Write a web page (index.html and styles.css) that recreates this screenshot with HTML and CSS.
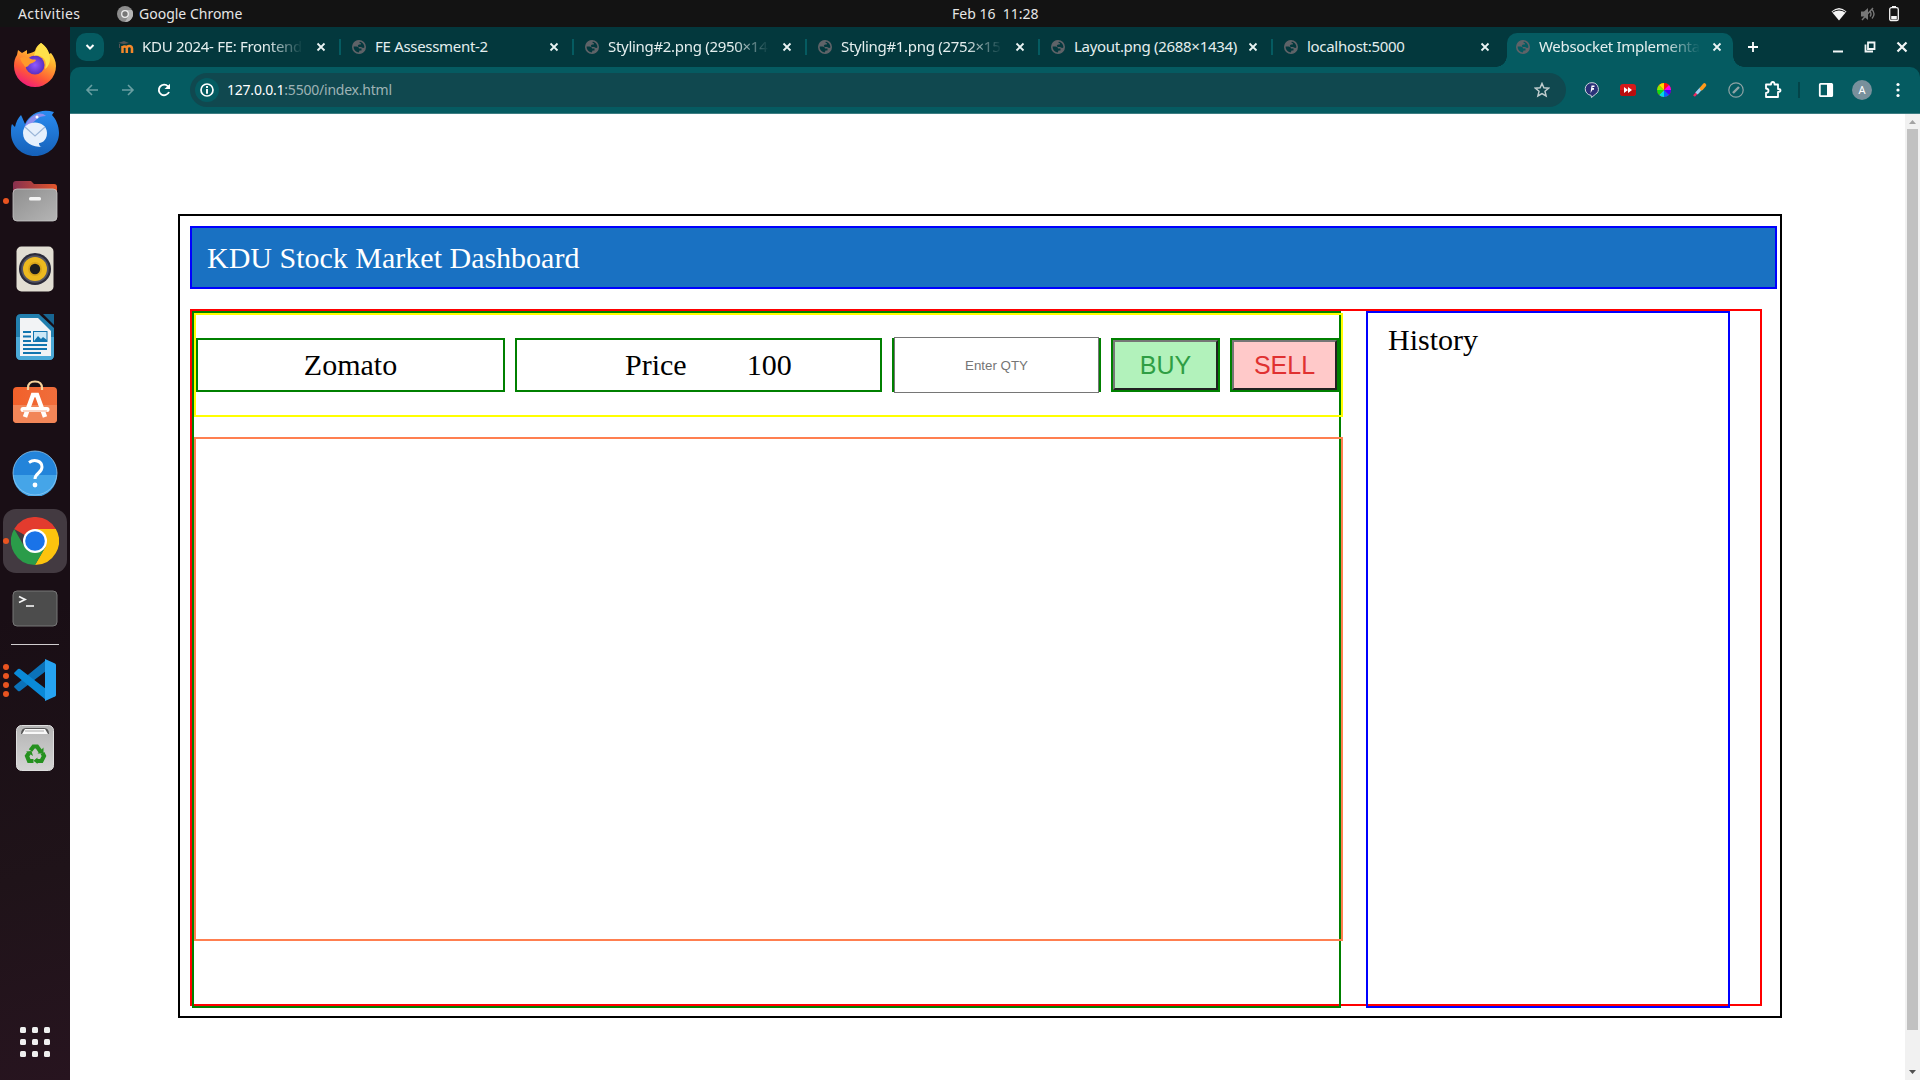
FILE: index.html
```html
<!DOCTYPE html>
<html lang="en">
<head>
<meta charset="utf-8">
<title>Websocket Implementation</title>
<link rel="stylesheet" href="styles.css">
</head>
<body>
<svg class="defs" width="0" height="0" aria-hidden="true">
  <defs>
    <linearGradient id="fxBody" x1=".8" y1="0" x2=".3" y2="1"><stop offset="0" stop-color="#fff44f"/><stop offset=".35" stop-color="#ffb02e"/><stop offset=".7" stop-color="#ff5a36"/><stop offset="1" stop-color="#f0197d"/></linearGradient>
    <radialGradient id="fxGlobe"><stop offset="0" stop-color="#9059ff"/><stop offset="1" stop-color="#5b2fc0"/></radialGradient>
    <linearGradient id="tbBody" x1="0" y1="0" x2="0" y2="1"><stop offset="0" stop-color="#2a8cf0"/><stop offset="1" stop-color="#1560b8"/></linearGradient>
    <linearGradient id="folderBack"><stop offset="0" stop-color="#86304f"/><stop offset="1" stop-color="#e3562b"/></linearGradient>
    <linearGradient id="folderFront" x1="0" y1="0" x2="1" y2="1"><stop offset="0" stop-color="#8f8f8f"/><stop offset="1" stop-color="#b5b5b5"/></linearGradient>
    <linearGradient id="bag" x1="0" y1="0" x2="1" y2="0"><stop offset="0" stop-color="#f2602a"/><stop offset="1" stop-color="#ef6e3c"/></linearGradient>
    <linearGradient id="bin" x1="0" y1="0" x2="0" y2="1"><stop offset="0" stop-color="#b4b4b4"/><stop offset="1" stop-color="#d4d4d4"/></linearGradient>
    <symbol id="globe" viewBox="0 0 14 14"><circle cx="7" cy="7" r="6.200" fill="none" stroke="#5f6368" stroke-width="1.600"/><path d="M8 .5A6.500 6.500 0 0 0 .6 6.500H4.500q2.500 0 2.500 2H9.500v2H7.500l-1 3Q11.500 13.500 13 9.500V7.500L11 8 9 7H6.500L5.800 5.500 7 4.500h1.800V3H7.500z" fill="#5f6368"/></symbol>
    <symbol id="x" viewBox="0 0 10 10"><path d="M1.500 1.500l7 7M8.500 1.500l-7 7" stroke="#eaf3f3" stroke-width="1.800" fill="none"/></symbol>
  </defs>
</svg>

<header class="panel">
  <span class="activities">Activities</span>
  <svg class="app-icon" width="16" height="16" viewBox="0 0 16 16"><circle cx="8" cy="8" r="8" fill="#8c8c8c"/><path d="M8 4h7A8 8 0 0 1 8 16l3.500-6" fill="#b5b5b5"/><circle cx="8" cy="8" r="3.300" fill="#777" stroke="#eee" stroke-width="1.300"/></svg>
  <span class="app-name">Google Chrome</span>
  <span class="clock">Feb 16&nbsp; 11:28</span>
  <span class="tray">
    <svg width="16" height="14" viewBox="0 0 16 14"><path d="M.5 4.500Q8-2.500 15.500 4.500L8 13.500z" fill="#f4f4f4"/><path d="M1.500 5.200Q8 .8 14.500 5.200" fill="none" stroke="#131313" stroke-width="1"/></svg>
    <svg width="16" height="16" viewBox="0 0 16 16"><path d="M1 5.500h3l4-3.500v12l-4-3.500H1z" fill="#777"/><path d="M10 5.500q2 2.500 0 5M12 3.500q4 4.500 0 9M2 14 13 2" stroke="#777" stroke-width="1.400" fill="none"/></svg>
    <svg width="10" height="16" viewBox="0 0 10 16"><path d="M3 1h4" stroke="#f4f4f4" stroke-width="2"/><rect x=".7" y="1.700" width="8.600" height="13" rx="1.800" fill="none" stroke="#f4f4f4" stroke-width="1.300"/><rect x="2.200" y="10" width="5.600" height="3.500" fill="#f4f4f4"/></svg>
  </span>
</header>

<div class="desktop">
  <nav class="dock">
    <div class="dock-item"><svg class="firefox" width="42" height="44" viewBox="0 0 42 44"><path d="M27 0c4 3 7 7 8 11l2-1c3 4 5 8 5 13a21 21 0 0 1-42 0c0-5 1-8 3-11l1-5 4 3 5-3v4c4-1 7-2 8-3 1-4 3-6 6-8z" fill="url(#fxBody)"/><circle cx="21" cy="22" r="9.500" fill="url(#fxGlobe)"/><path d="M6 15c5-2 8-1 11 1 2 1 4 0 5 1-1 3-6 3-7 5-2 3-5 2-5 0-2-2-3-4-4-7z" fill="#ff9a2b"/><path d="M27 0c5 3 9 9 9 16 0 4-2 8-5 10 2-7 0-11-5-13-3-1-4-1-6 0 1-5 3-9 7-13z" fill="#ffe14a"/></svg></div>
    <div class="dock-item"><svg width="48" height="48" viewBox="0 0 48 48"><path d="M10 6c2 4 3 7 4 9C19 4 31-1 43 3l-2 3c4 4 7 11 7 18 0 13-11 23-24 23S0 37 0 24c0-4 0-7 1-9l3 3c1-5 3-9 6-12z" fill="url(#tbBody)"/><path d="M13 19c5-3 9-5 13-9 2-2 5-3 9-3-6-6-17-1-22 12z" fill="#8e8ff0"/><circle cx="26" cy="8" r="1.500" fill="#fff"/><path d="M12 24c0-14 24-14 24 0 0 9-7 10-8 10 0 2 1 4 3 4-9 0-19-4-19-14z" fill="#e6f0fc"/><path d="M14 18l10 9 10-9" fill="none" stroke="#9bb6d8" stroke-width="1.200"/></svg></div>
    <div class="dock-item"><i class="dots"><b></b></i><svg width="46" height="42" viewBox="0 0 46 42"><path d="M1 4q0-3 3-3h15l3 3h20q3 0 3 3v14H1z" fill="url(#folderBack)"/><rect x="1" y="9" width="44" height="32" rx="4" fill="url(#folderFront)" stroke="#c6c6c6" stroke-width=".8"/><rect x="17" y="17" width="12" height="3.500" rx="1.500" fill="#f5f5f5"/></svg></div>
    <div class="dock-item"><svg width="38" height="46" viewBox="0 0 38 46"><rect x=".5" y=".5" width="37" height="45" rx="5" fill="#e2ded3"/><circle cx="19" cy="23" r="16" fill="#2b2b3a"/><circle cx="19" cy="23" r="13.800" fill="#555563"/><circle cx="19" cy="23" r="12" fill="#edb91f"/><circle cx="19" cy="23" r="7" fill="#d9a51b"/><circle cx="19" cy="23" r="5.200" fill="#1e1e1e"/></svg></div>
    <div class="dock-item"><svg width="38" height="46" viewBox="0 0 38 46"><path d="M0 5q0-5 5-5h18l15 14v27q0 5-5 5H5q-5 0-5-5z" fill="#227fae"/><path d="M0 23h38v18q0 5-5 5H5q-5 0-5-5z" fill="#4ba9d7"/><path d="M27 0h11v11z" fill="#186693"/><path d="M4 4h18l13 13v25H4z" fill="#f2f3f5"/><path d="M7 18h8M7 22.500h8M7 27h8M7 31h24M7 35h24M7 39h18" stroke="#1275af" stroke-width="1.800"/><rect x="17.500" y="17.500" width="13.500" height="10" fill="#cce8f7" stroke="#1275af"/><path d="M18 27l4-5 3 3 2-2 4 3v1z" fill="#1275af"/></svg></div>
    <div class="dock-item"><svg class="raise" width="46" height="44" viewBox="0 0 46 44"><rect x="1" y="7" width="44" height="36" rx="4" fill="url(#bag)"/><path d="M1 25h44v14q0 4-4 4H5q-4 0-4-4z" fill="#f28658"/><path d="M16 10V8q0-6.500 7-6.500T30 8v2" fill="none" stroke="#f8d39c" stroke-width="2.200"/><path d="M13 37l8-22h4l8 22" fill="none" stroke="#fff" stroke-width="4.500"/><path d="M11 29.500h24" stroke="#fff" stroke-width="5" stroke-linecap="round"/><path d="M11 31h24" stroke="#f7a988" stroke-width="1"/></svg></div>
    <div class="dock-item"><svg width="46" height="46" viewBox="0 0 46 46"><circle cx="23" cy="23" r="22" fill="#2384da"/><path d="M1 25a22 22 0 0 0 44 0z" fill="#45a5e8"/><circle cx="23" cy="23" r="22" fill="none" stroke="#8fc9f2" stroke-width=".8"/><path d="M17 12.500c5-3.500 13-2 13 4.500 0 6-7 6-7 12" fill="none" stroke="#fff" stroke-width="3"/><circle cx="23" cy="35" r="2.400" fill="#fff"/></svg></div>
    <div class="dock-item active"><i class="dots"><b></b></i><svg width="48" height="48" viewBox="0 0 48 48"><path d="M24 24 3.200 12A24 24 0 0 1 44.800 12z" fill="#e33b2e"/><path d="M24 12h20.800A24 24 0 0 1 24 48l10.400-18z" fill="#fcc30e"/><path d="M3.200 12 13.600 30 24 36 34.400 30 24 48A24 24 0 0 1 3.200 12z" fill="#2a9c49"/><circle cx="24" cy="24" r="12" fill="#fff"/><circle cx="24" cy="24" r="9.800" fill="#1a73e8"/></svg></div>
    <div class="dock-item"><svg width="46" height="38" viewBox="0 0 46 38"><rect x="1" y="1" width="44" height="35" rx="4" fill="#4c4c4c" stroke="#777"/><path d="M7 6.500l6 3-6 3" fill="none" stroke="#f4f4f4" stroke-width="1.800"/><path d="M14 16h8" stroke="#f4f4f4" stroke-width="1.600"/></svg></div>
    <hr class="dock-line">
    <div class="dock-item"><i class="dots"><b></b><b></b><b></b><b></b></i><svg width="42" height="42" viewBox="0 0 42 42"><path d="M0 28l4 4q1 .6 2 0L32 12V1L1 26.500q-1 .8-1 1.500z" fill="#0b72b9"/><path d="M0 14l4-4q1-.6 2 0l26 20v11L1 15.500q-1-.8-1-1.500z" fill="#0a8ad8"/><path d="M31 0l10 4.500q1 .5 1 1.500v30q0 1-1 1.500L31 42z" fill="#26a4f2"/></svg></div>
    <div class="dock-item"><svg width="38" height="46" viewBox="0 0 38 46"><rect x=".5" y=".5" width="37" height="45" rx="5" fill="url(#bin)" stroke="#dedede"/><path d="M5 9q0-6 5-6h18q5 0 5 6z" fill="#555"/><path d="M6 9l3-5h20l3 5z" fill="#f8f8f8"/><path d="M9 6h19" stroke="#aaa"/><g fill="none" stroke="#25911f" stroke-width="4.200"><path d="M14.500 25.500l3-4h3.500l3.500 5"/><path d="M26.500 28l1.500 3-2.500 5h-5"/><path d="M17.500 36h-4.500l-2-5 2-3"/></g><path d="M27.500 22.500v6h-6zM21.500 32.500v6.500l-4-3.300zM10 26.500l5.500-.5 1.500 5z" fill="#25911f"/></svg></div>
    <svg class="apps" width="32" height="32" viewBox="0 0 32 32" fill="#efefef"><rect x="1" y="1" width="6" height="6" rx="1.500"/><rect x="13" y="1" width="6" height="6" rx="1.500"/><rect x="25" y="1" width="6" height="6" rx="1.500"/><rect x="1" y="13" width="6" height="6" rx="1.500"/><rect x="13" y="13" width="6" height="6" rx="1.500"/><rect x="25" y="13" width="6" height="6" rx="1.500"/><rect x="1" y="25" width="6" height="6" rx="1.500"/><rect x="13" y="25" width="6" height="6" rx="1.500"/><rect x="25" y="25" width="6" height="6" rx="1.500"/></svg>
  </nav>

  <div class="browser">
    <div class="tabstrip">
      <div class="tab-search"><svg width="10" height="8" viewBox="0 0 10 8"><path d="M1.500 2 5 5.500 8.500 2" stroke="#fff" stroke-width="2" fill="none"/></svg></div>
      <div class="tab first"><svg class="fav" width="16" height="14" viewBox="0 0 16 14"><path d="M0 3 6 1l5 2-5 1z" fill="#555"/><path d="M1.500 4v4" stroke="#555"/><path d="M4.500 13V6M8.800 13V8.500q0-2.500 2.500-2.500t2.700 2.500V13M4.500 7.500q2-2 4.300 0" fill="none" stroke="#f5882a" stroke-width="2.500"/></svg><span class="title fade">KDU 2024- FE: Frontend</span><svg class="close"><use href="#x"/></svg></div>
      <div class="tab"><svg class="fav"><use href="#globe"/></svg><span class="title">FE Assessment-2</span><svg class="close"><use href="#x"/></svg></div>
      <div class="tab"><svg class="fav"><use href="#globe"/></svg><span class="title fade">Styling#2.png (2950×14</span><svg class="close"><use href="#x"/></svg></div>
      <div class="tab"><svg class="fav"><use href="#globe"/></svg><span class="title fade">Styling#1.png (2752×15</span><svg class="close"><use href="#x"/></svg></div>
      <div class="tab"><svg class="fav"><use href="#globe"/></svg><span class="title">Layout.png (2688×1434)</span><svg class="close"><use href="#x"/></svg></div>
      <div class="tab last"><svg class="fav"><use href="#globe"/></svg><span class="title">localhost:5000</span><svg class="close"><use href="#x"/></svg></div>
      <div class="tab current"><svg class="fav"><use href="#globe"/></svg><span class="title fade">Websocket Implementa</span><svg class="close"><use href="#x"/></svg></div>
      <svg class="new-tab" width="12" height="12" viewBox="0 0 12 12"><path d="M6 1v10M1 6h10" stroke="#fff" stroke-width="1.800"/></svg>
      <div class="controls">
        <svg width="12" height="12" viewBox="0 0 12 12"><path d="M1 10.500h10" stroke="#f2f6f6" stroke-width="2"/></svg>
        <svg width="12" height="12" viewBox="0 0 12 12"><path d="M4 1.500h6.500V8H4zM1.500 3.500v7H9" fill="none" stroke="#f2f6f6" stroke-width="1.800"/></svg>
        <svg width="12" height="12" viewBox="0 0 12 12"><path d="M1.500 1.500l9 9M10.500 1.500l-9 9" stroke="#f2f6f6" stroke-width="2.200"/></svg>
      </div>
    </div>

    <div class="toolbar">
      <div class="nav-buttons">
        <svg width="14" height="12" viewBox="0 0 14 12"><path d="M13 6H2M7 1 2 6l5 5" fill="none" stroke="#6a9fa2" stroke-width="1.600"/></svg>
        <svg width="14" height="12" viewBox="0 0 14 12"><path d="M1 6h11M7 1l5 5-5 5" fill="none" stroke="#6a9fa2" stroke-width="1.600"/></svg>
        <svg width="14" height="14" viewBox="0 0 14 14"><path d="M12 9A5.300 5.300 0 1 1 11 3.300" fill="none" stroke="#fff" stroke-width="1.900"/><path d="M13 .8V6H7.500z" fill="#fff"/></svg>
      </div>
      <div class="omnibox">
        <div class="site-info"><svg width="14" height="14" viewBox="0 0 14 14"><circle cx="7" cy="7" r="6" fill="none" stroke="#fff" stroke-width="1.700"/><path d="M7 3v2M7 6v4.700" stroke="#fff" stroke-width="1.900"/></svg></div>
        <span class="url"><span class="host">127.0.0.1</span>:5500/index.html</span>
        <svg class="star" width="16" height="16" viewBox="0 0 16 16"><path d="M8 1.500l1.900 4.300 4.700.4-3.600 3.100 1.100 4.600L8 11.500l-4.100 2.400L5 9.300 1.400 6.200l4.700-.4z" fill="none" stroke="#c0cdce" stroke-width="1.500"/></svg>
      </div>
      <div class="extensions">
        <svg width="16" height="16" viewBox="0 0 16 16"><path d="M8 .7a6.300 6.300 0 0 1 3.300 11.700L7.500 15.500l-.4-2.200A6.300 6.300 0 0 1 8 .7z" fill="#2a3178" stroke="#ccd4dc"/><path d="M10.500 3.500H7.500L6.500 11l2-3.300h1.500V6H8.500V5h2z" fill="#fff"/></svg>
        <svg width="16" height="16" viewBox="0 0 16 16"><rect y="2" width="16" height="12" rx="3" fill="#d61a1a"/><path d="M0 8h16v3q0 3-3 3H3q-3 0-3-3z" fill="#b80d0d"/><path d="M4 5v6l4-3zM8 5v6l4-3z" fill="#fff"/></svg>
        <svg width="16" height="16" viewBox="0 0 16 16"><circle cx="8" cy="8" r="7" fill="#e11"/><path d="M8 8V1a7 7 0 0 1 5 2z" fill="#f11"/><path d="M8 8l5-5a7 7 0 0 1 2 5z" fill="#f0e"/><path d="M8 8h7a7 7 0 0 1-2 5z" fill="#40f"/><path d="M8 8l5 5a7 7 0 0 1-5 2z" fill="#06f"/><path d="M8 8v7a7 7 0 0 1-5-2z" fill="#0dd"/><path d="M8 8l-5 5a7 7 0 0 1-2-5z" fill="#1d1"/><path d="M8 8H1a7 7 0 0 1 2-5z" fill="#8e0"/><path d="M8 8 3 3a7 7 0 0 1 5-2z" fill="#fd0"/></svg>
        <svg width="16" height="16" viewBox="0 0 16 16"><path d="M2 14 8 7.500" stroke="#ee2a62" stroke-width="2.500"/><path d="M4.500 11.500 9 6.500" stroke="#9bd0f2" stroke-width="3.200"/><path d="M9.500 6.500l3-3.500" stroke="#ff9a1b" stroke-width="3.600" stroke-linecap="round"/></svg>
        <svg width="16" height="16" viewBox="0 0 16 16"><circle cx="8" cy="8" r="7.200" fill="none" stroke="#8fa3a5" stroke-width="1.200"/><path d="M5 11l6-6" stroke="#8fa3a5" stroke-width="2.400"/></svg>
        <svg class="puzzle" width="18" height="18" viewBox="0 0 18 18"><path d="M2 3.500h5q0-2.500 1.800-2.500T10.500 3.500H14V8q2.500 0 2.500 1.500T14 11v5H2v-4q2.500-.3 2.500-2.300T2 7.500z" fill="none" stroke="#fff" stroke-width="1.800" stroke-linejoin="round"/></svg>
      </div>
      <i class="divider"></i>
      <div class="tools">
        <svg width="16" height="16" viewBox="0 0 16 16"><rect x="1.800" y="1.800" width="12.400" height="12.400" rx=".8" fill="none" stroke="#fff" stroke-width="1.800"/><path d="M9 1h5v14H9z" fill="#fff"/></svg>
        <div class="avatar">A</div>
        <svg width="4" height="16" viewBox="0 0 4 16" fill="#fff"><circle cx="2" cy="2.500" r="1.600"/><circle cx="2" cy="8" r="1.600"/><circle cx="2" cy="13.500" r="1.600"/></svg>
      </div>
    </div>

    <div class="viewport">
      <main class="dashboard">
        <div class="title-bar">KDU Stock Market Dashboard</div>
        <div class="content">
          <section class="trading">
            <div class="controls-row">
              <div class="cell name">Zomato</div>
              <div class="cell price"><span>Price</span><span>100</span></div>
              <div class="cell qty"><input type="text" placeholder="Enter QTY"></div>
              <div class="cell action"><button class="buy">BUY</button></div>
              <div class="cell action"><button class="sell">SELL</button></div>
            </div>
            <div class="chart"></div>
          </section>
          <section class="history">History</section>
        </div>
      </main>
      <div class="scrollbar">
        <svg width="15" height="15" viewBox="0 0 15 15"><path d="M4 10h7L7.500 6z" fill="#a3a3a3"/></svg>
        <div class="thumb"></div>
        <svg class="down" width="15" height="15" viewBox="0 0 15 15"><path d="M4 5h7L7.500 9z" fill="#505050"/></svg>
      </div>
    </div>
  </div>
</div>
</body>
</html>
```
FILE: styles.css
```css
* { box-sizing: border-box; }
body {
  margin: 0;
  width: 1920px;
  height: 1080px;
  overflow: hidden;
  display: flex;
  flex-direction: column;
  background: #fff;
  font-family: "Noto Sans", sans-serif;
}
svg { display: block; flex: none; }
.defs { position: absolute; }

/* top panel */
.panel {
  height: 27px;
  flex: none;
  background: #131313;
  color: #e6e6e6;
  display: grid;
  grid-template-columns: 99px 16px 837px 90px 1fr;
  align-items: center;
  font-size: 14px;
  line-height: 26px;
  white-space: nowrap;
}
.activities { padding-left: 18px; letter-spacing: .4px; }
.app-icon { margin-left: 18px; }
.app-name { padding-left: 24px; }
.tray {
  justify-self: end;
  display: flex;
  align-items: center;
  gap: 13px;
  padding-right: 21px;
}

.desktop { flex: 1; display: flex; min-height: 0; }

/* dock */
.dock {
  width: 70px;
  flex: none;
  padding: 4px 0 22px;
  display: flex;
  flex-direction: column;
  align-items: center;
  background: linear-gradient(165deg, #190e15 55%, #1f1319 80%, #27141f 100%);
}
.dock-item {
  position: relative;
  width: 64px;
  height: 64px;
  margin: 2px 0;
  flex: none;
  display: flex;
  align-items: center;
  justify-content: center;
  border-radius: 13px;
}
.dock-item.active { background: #433a41; }
.raise { margin-top: -7px; }
.firefox { margin-top: -1px; }
.dots {
  position: absolute;
  left: 0;
  top: 0;
  height: 100%;
  display: flex;
  flex-direction: column;
  justify-content: center;
  gap: 3px;
}
.dots b { width: 6px; height: 6px; border-radius: 50%; background: #e95420; }
.dock-line { width: 48px; height: 1px; border: 0; margin: 1px 0; background: #d0cdcf; flex: none; }
.apps { margin-top: auto; }

/* browser */
.browser { flex: 1; min-width: 0; display: flex; flex-direction: column; background: #03383d; }
.tabstrip { height: 40px; flex: none; display: flex; align-items: flex-start; padding-top: 6px; }
.tab-search {
  width: 28px;
  height: 28px;
  flex: none;
  margin: 0 9px 0 6px;
  border-radius: 10px;
  background: #055b61;
  display: grid;
  place-items: center;
}
.tab {
  width: 233px;
  height: 34px;
  flex: none;
  display: flex;
  align-items: center;
  padding: 0 15px 6px 11px;
  color: #e4eeee;
  font-size: 15px;
  background: linear-gradient(#055b61, #055b61) right 6px / 2px 16px no-repeat;
}
.tab.last { width: 234px; background: none; padding-right: 17px; }
.fav { width: 14px; height: 14px; margin-right: 9px; }
.tab.first { width: 228px; padding-left: 5px; }
.first .fav { width: 16px; margin-right: 8px; }
.title { width: 163px; flex: none; white-space: nowrap; line-height: 26px; margin-bottom: 2px; letter-spacing: -.3px; }
.fade { width: 161px; mask-image: linear-gradient(90deg, #000 78%, transparent 100%); }
.first .title { letter-spacing: -.3px; }
.close { width: 10px; height: 10px; margin-left: auto; }
.tab.current {
  position: relative;
  width: 226px;
  padding: 0 11px 6px 9px;
  border-radius: 10px 10px 0 0;
  background: #055b61;
}
.current::before, .current::after {
  content: "";
  position: absolute;
  bottom: 0;
  width: 11px;
  height: 11px;
}
.current::before { left: -11px; background: radial-gradient(circle at 0 0, transparent 10.5px, #055b61 11px); }
.current::after { right: -11px; background: radial-gradient(circle at 100% 0, transparent 10.5px, #055b61 11px); }
.new-tab { margin: 8px 0 0 14px; }
.controls { margin-left: auto; display: flex; gap: 20px; padding: 8px 12px 0 0; }

.toolbar {
  height: 47px;
  flex: none;
  display: flex;
  align-items: center;
  padding: 0 4px 0 15px;
  background: #055b61;
  border-bottom: 1px solid #3d7d82;
  border-radius: 10px 10px 0 0;
}
.nav-buttons { display: flex; align-items: center; gap: 22px; width: 105px; flex: none; }
.omnibox {
  width: 1376px;
  flex: none;
  height: 34px;
  border-radius: 17px;
  background: #10484f;
  display: flex;
  align-items: center;
  padding: 0 16px 0 5px;
}
.site-info { width: 24px; height: 24px; border-radius: 50%; background: #055b61; display: grid; place-items: center; }
.url { margin-left: 8px; color: #9eb3b5; font-size: 14px; letter-spacing: -.22px; line-height: 34px; }
.host { color: #fff; }
.star { margin-left: auto; }
.extensions { display: grid; grid-template-columns: repeat(6, 36px); place-items: center; margin-left: 8px; }
.puzzle { margin-left: 1px; }
.divider { width: 2px; height: 16px; margin-left: 8px; background: #034449; }
.tools { display: grid; grid-template-columns: repeat(3, 36px); place-items: center; margin-left: 8px; }
.avatar {
  width: 20px;
  height: 20px;
  border-radius: 50%;
  background: #78909c;
  color: #fff;
  font-size: 11px;
  line-height: 20px;
  text-align: center;
}

/* page */
.viewport {
  flex: 1;
  min-height: 0;
  display: flex;
  justify-content: space-between;
  background: #fff;
  font-family: "Liberation Serif", serif;
  font-size: 30px;
  color: #000;
}
.dashboard {
  width: 1604px;
  height: 804px;
  margin: 100px 0 0 108px;
  padding: 10px;
  border: 2px solid #000;
}
.title-bar {
  width: 1587px;
  height: 63px;
  padding-left: 15px;
  display: flex;
  align-items: center;
  border: 2px solid #00f;
  background: #1971c2;
  color: #fff;
}
.content {
  width: 1572px;
  height: 697px;
  margin-top: 20px;
  display: flex;
  align-items: flex-start;
  gap: 25px;
  border: 2px solid #f00;
}
.trading { width: 1149px; height: 697px; flex: none; border: 2px solid #008000; }
.controls-row {
  width: 1149px;
  height: 104px;
  display: flex;
  align-items: center;
  gap: 10px;
  border: 2px solid #ff0;
}
.cell { height: 54px; flex: none; border: 2px solid #008000; display: flex; align-items: center; }
.name { width: 309px; justify-content: center; }
.price { width: 367px; padding-left: 108px; gap: 60px; }
.qty { width: 209px; }
.qty input {
  width: 205px;
  height: 56px;
  flex: none;
  padding: 1px 2px;
  border: 1px solid #767676;
  border-radius: 0;
  background: #fff;
  font: 13.333px "Liberation Sans", sans-serif;
  text-align: center;
}
.qty input::placeholder { color: #757575; opacity: 1; }
.action { width: 109px; }
.action button {
  width: 105px;
  height: 50px;
  padding: 0;
  border: 2px solid;
  border-color: #767676 #212121 #212121 #767676;
  font: 25px "Liberation Sans", sans-serif;
}
.buy { background: #b2f2bb; color: #2f9e44; }
.sell { background: #ffc9c9; color: #e03131; }
.chart { width: 1149px; height: 504px; margin-top: 20px; border: 2px solid #ff7f50; }
.history { width: 364px; height: 697px; flex: none; padding: 10px 20px; border: 2px solid #00f; }

.scrollbar { width: 15px; background: #f1f1f1; display: flex; flex-direction: column; }
.thumb { width: 11px; height: 901px; margin: 0 2px; background: #c1c1c1; }
.down { margin-top: auto; }
```
